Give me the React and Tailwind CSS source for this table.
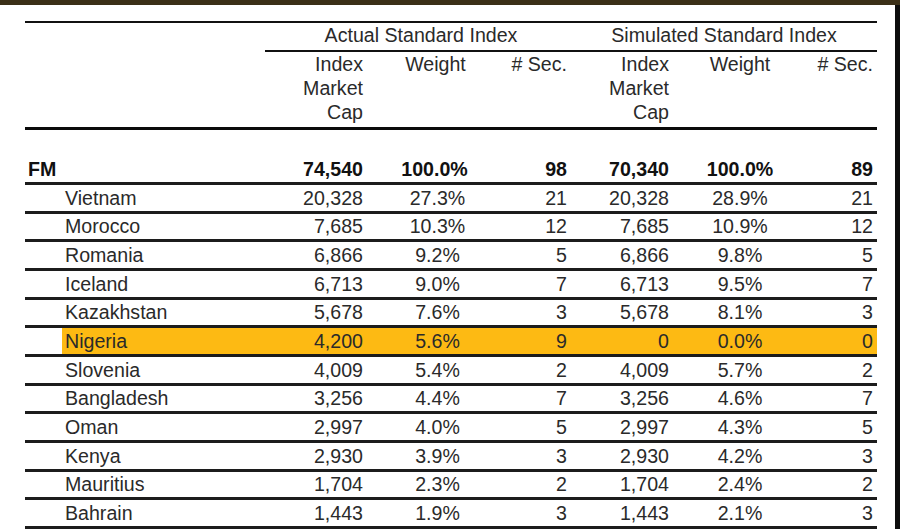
import React from 'react'

const cols = 'grid grid-cols-[37px_203px_105px_135px_70px_100px_130px_72px]'

const rows = [
  ['Vietnam', '20,328', '27.3%', '21', '20,328', '28.9%', '21'],
  ['Morocco', '7,685', '10.3%', '12', '7,685', '10.9%', '12'],
  ['Romania', '6,866', '9.2%', '5', '6,866', '9.8%', '5'],
  ['Iceland', '6,713', '9.0%', '7', '6,713', '9.5%', '7'],
  ['Kazakhstan', '5,678', '7.6%', '3', '5,678', '8.1%', '3'],
  ['Nigeria', '4,200', '5.6%', '9', '0', '0.0%', '0'],
  ['Slovenia', '4,009', '5.4%', '2', '4,009', '5.7%', '2'],
  ['Bangladesh', '3,256', '4.4%', '7', '3,256', '4.6%', '7'],
  ['Oman', '2,997', '4.0%', '5', '2,997', '4.3%', '5'],
  ['Kenya', '2,930', '3.9%', '3', '2,930', '4.2%', '3'],
  ['Mauritius', '1,704', '2.3%', '2', '1,704', '2.4%', '2'],
  ['Bahrain', '1,443', '1.9%', '3', '1,443', '2.1%', '3'],
]

const Row = ({ r }) => {
  const hi = r[0] === 'Nigeria'
  const bg = hi ? 'bg-[#fdba13]' : ''
  return (
    <div className={`${cols} h-[28.67px] border-b-[3px] border-[#1c1c1c] items-stretch`}>
      <div />
      <div className={`${bg} pl-[3px] flex items-center`}>{r[0]}</div>
      <div className={`${bg} pr-[7px] flex items-center justify-end`}>{r[1]}</div>
      <div className={`${bg} flex items-center justify-center`}>{r[2]}</div>
      <div className={`${bg} pr-[8px] flex items-center justify-end`}>{r[3]}</div>
      <div className={`${bg} pr-[6px] flex items-center justify-end`}>{r[4]}</div>
      <div className={`${bg} flex items-center justify-center`}>{r[5]}</div>
      <div className={`${bg} pr-[4px] flex items-center justify-end`}>{r[6]}</div>
    </div>
  )
}

const App = () => {
  return (
    <div className="w-[900px] h-[529px] overflow-hidden bg-white flex flex-col font-['Liberation_Sans',Arial,sans-serif] text-[19.6px] leading-[24px] text-[#2a2a2a]">
      <div className="h-[5px] bg-[#3b2f17] shrink-0" />
      <div className="flex flex-1">
        <div className="w-[895px] pl-[25px] pr-[18px] pt-[16px]">
          <div className="border-t-2 border-[#111]">
            {/* group header */}
            <div className={cols}>
              <div className="col-span-2" />
              <div className="col-span-3 h-[29px] border-b-2 border-[#111] text-center pl-[2px]">
                Actual Standard Index
              </div>
              <div className="col-span-3 h-[29px] border-b-2 border-[#111] text-center pr-[4px]">
                Simulated Standard Index
              </div>
            </div>
            {/* sub header */}
            <div className={`${cols} border-b-[3px] border-[#0a0a0a] pb-[3px]`}>
              <div className="col-span-2" />
              <div className="text-right pr-[7px]">
                Index
                <br />
                Market
                <br />
                Cap
              </div>
              <div className="text-center pr-[4px]">Weight</div>
              <div className="text-right pr-[8px]"># Sec.</div>
              <div className="text-right pr-[6px]">
                Index
                <br />
                Market
                <br />
                Cap
              </div>
              <div className="text-center">Weight</div>
              <div className="text-right pr-[4px]"># Sec.</div>
            </div>
            {/* FM total */}
            <div className={`${cols} h-[55px] border-b-[3px] border-[#1c1c1c] items-end pb-[1px] font-bold text-[#111]`}>
              <div className="col-span-2 pl-[3px]">FM</div>
              <div className="text-right pr-[7px]">74,540</div>
              <div className="text-center pr-[6px]">100.0%</div>
              <div className="text-right pr-[8px]">98</div>
              <div className="text-right pr-[6px]">70,340</div>
              <div className="text-center">100.0%</div>
              <div className="text-right pr-[4px]">89</div>
            </div>
            {rows.map((r) => (
              <Row key={r[0]} r={r} />
            ))}
          </div>
        </div>
        <div className="w-[5px] bg-[#0d0d0d]" />
      </div>
    </div>
  )
}

export default App
